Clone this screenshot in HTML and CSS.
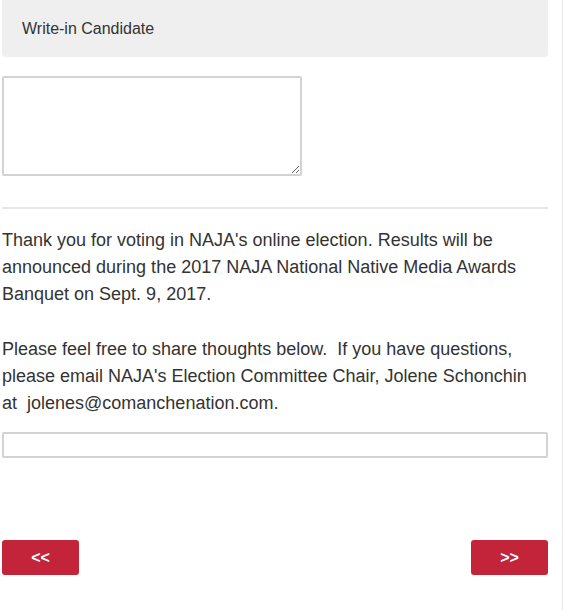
FILE: index.html
```html
<!DOCTYPE html>
<html>
<head>
<meta charset="utf-8">
<link rel="stylesheet" href="styles.css">
</head>
<body>
<div class="page">
  <div class="content">
    <div class="panel">Write-in Candidate</div>
    <textarea class="writein"></textarea>
    <hr class="divider">
    <p class="message">Thank you for voting in NAJA's online election. Results will be announced during the 2017 NAJA National Native Media Awards Banquet on Sept. 9, 2017.<br><br>Please feel free to share thoughts below.&nbsp; If you have questions, please email NAJA's Election Committee Chair, Jolene Schonchin at&nbsp; jolenes@comanchenation.com.</p>
    <input class="thoughts" type="text">
    <div class="nav">
      <button class="btn">&lt;&lt;</button>
      <button class="btn">&gt;&gt;</button>
    </div>
  </div>
</div>
</body>
</html>
```
FILE: styles.css
```css
html, body {
  margin: 0;
  padding: 0;
  background: #fff;
}
body {
  font-family: "Liberation Sans", Arial, sans-serif;
  color: #333;
}
.page {
  width: 562px;
  min-height: 610px;
  border-right: 1px solid #e8e8e8;
}
.content {
  margin-left: 2px;
  width: 546px;
  display: flex;
  flex-direction: column;
  align-items: flex-start;
}
.panel {
  box-sizing: border-box;
  width: 546px;
  height: 57px;
  line-height: 58px;
  padding: 0 20px;
  background: #efefef;
  border-radius: 0 0 4px 4px;
  font-size: 16px;
  color: #333;
}
.writein {
  box-sizing: border-box;
  margin: 19px 0 0 0;
  width: 300px;
  height: 100px;
  border: 2px solid #d2d2d7;
  border-radius: 2px;
  padding: 4px;
  resize: both;
  font-family: inherit;
}
.divider {
  margin: 31px 0 0 0;
  width: 546px;
  height: 2px;
  border: none;
  background: #e6e6e6;
}
.message {
  margin: 18px 0 0 0;
  font-size: 18px;
  line-height: 27.2px;
  color: #333;
}
.thoughts {
  box-sizing: border-box;
  margin: 15px 0 0 0;
  width: 546px;
  height: 26px;
  border: 2px solid #d2d2d7;
  border-radius: 2px;
  padding: 0 4px;
  font-family: inherit;
}
.nav {
  margin-top: 82px;
  width: 546px;
  display: flex;
  justify-content: space-between;
}
.btn {
  width: 77px;
  height: 35px;
  border: none;
  border-radius: 3px;
  background: #c4243a;
  color: #fff;
  font-family: inherit;
  font-size: 16px;
  font-weight: bold;
  padding: 0;
  cursor: pointer;
}
```
